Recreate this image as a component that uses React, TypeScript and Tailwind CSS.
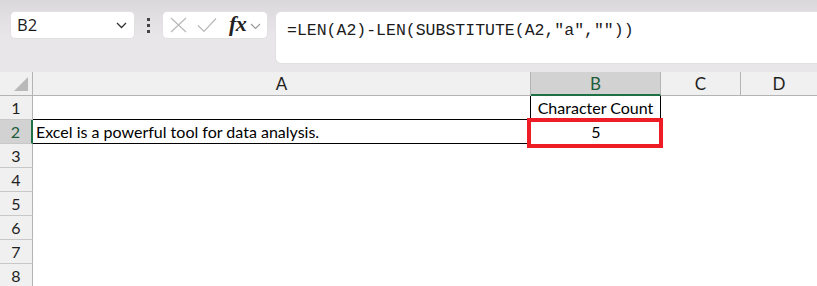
import React from "react";

const rows = [1, 2, 3, 4, 5, 6, 7, 8];

function RowHeader({ n }: { n: number }) {
  const sel = n === 2;
  return (
    <div
      className={
        "w-[33px] h-[24px] shrink-0 flex items-center justify-center border-b border-[#c8c8c8] text-[16px] " +
        (sel
          ? "bg-[#d2d2d2] border-r-2 border-r-[#1e7145] text-[#1e5c3a]"
          : "bg-[#f0f0f0] border-r border-r-[#b4b4b4] text-[#1e1e1e]")
      }
    >
      {n}
    </div>
  );
}

export default function App() {
  return (
    <div
      className="w-[817px] h-[286px] overflow-hidden bg-white"
      style={{ fontFamily: "Lato, 'Liberation Sans', sans-serif" }}
    >
      {/* Toolbar */}
      <div className="h-[72px] bg-gradient-to-b from-[#dad8da] via-[#e8e6e8] to-[#e8e6e8] flex items-start pt-[11px] pl-[10px] gap-0 relative">
        {/* Name box */}
        <div className="w-[125px] h-[28px] bg-white rounded-[5px] border border-[#e2e0e2] flex items-center justify-between pl-[6px] pr-[7px]">
          <span className="text-[16.5px] text-[#1b1b1b]" style={{ fontFamily: "'Open Sans', sans-serif" }}>B2</span>
          <svg width="11" height="7" viewBox="0 0 11 7">
            <path d="M1 1 L5.5 5.5 L10 1" fill="none" stroke="#333" strokeWidth="1.3" />
          </svg>
        </div>
        {/* dots */}
        <div className="w-[27px] h-[28px] flex flex-col items-center justify-center gap-[3px]">
          <div className="w-[3px] h-[3px] bg-[#444]" />
          <div className="w-[3px] h-[3px] bg-[#444]" />
          <div className="w-[3px] h-[3px] bg-[#444]" />
        </div>
        {/* function box */}
        <div className="w-[106px] h-[28px] bg-white rounded-[5px] border border-[#e2e0e2] flex items-center pl-[7px]">
          <svg width="17" height="16" viewBox="0 0 17 16">
            <path d="M1 1 L16 15 M16 1 L1 15" stroke="#b8b8b8" strokeWidth="1.2" fill="none" />
          </svg>
          <svg width="20" height="16" viewBox="0 0 20 16" className="ml-[10px]">
            <path d="M1 8.5 L7 14.5 L19 1.5" stroke="#b8b8b8" strokeWidth="1.2" fill="none" />
          </svg>
          <span
            className="ml-[12px] text-[22px] italic font-semibold leading-none text-[#222] tracking-[-0.5px] -mt-[2px]"
            style={{ fontFamily: "'Liberation Serif', 'DejaVu Serif', serif" }}
          >
            fx
          </span>
          <svg width="11" height="7" viewBox="0 0 11 7" className="ml-[4px] mt-[2px]">
            <path d="M1 1 L5.5 5.5 L10 1" fill="none" stroke="#999" strokeWidth="1.1" />
          </svg>
        </div>
        {/* formula box */}
        <div className="ml-[7px] flex-1 h-[53px] bg-white rounded-l-[6px] border border-r-0 border-[#e2e0e2] pl-[11px] pt-[5px]">
          <span
            className="text-[16.5px] text-[#1b1b1b] whitespace-pre"
            style={{ fontFamily: "'Liberation Mono', monospace" }}
          >
            =LEN(A2)-LEN(SUBSTITUTE(A2,"a",""))
          </span>
        </div>
      </div>

      {/* Column header row */}
      <div className="flex h-[24px]">
        <div className="w-[33px] h-[24px] bg-[#f0f0f0] border-r border-b border-[#b4b4b4] relative">
          <svg width="16" height="16" viewBox="0 0 16 16" className="absolute right-[3px] bottom-[3px]">
            <path d="M15 1 L15 15 L1 15 Z" fill="#b9b9b9" />
          </svg>
        </div>
        <div className="w-[498px] h-[24px] bg-[#f0f0f0] border-r border-b border-[#b4b4b4] flex items-center justify-center text-[17px] text-[#1e1e1e]">
          A
        </div>
        <div className="w-[130px] h-[24px] bg-[#d2d2d2] border-r border-r-[#b4b4b4] border-b-2 border-b-[#1e7145] flex items-center justify-center text-[17px] text-[#1e5c3a] pt-[1px]">
          B
        </div>
        <div className="w-[80px] h-[24px] bg-[#f0f0f0] border-r border-b border-[#b4b4b4] flex items-center justify-center text-[17px] text-[#1e1e1e]">
          C
        </div>
        <div className="flex-1 h-[24px] bg-[#f0f0f0] border-b border-[#b4b4b4] flex items-center justify-center text-[17px] text-[#1e1e1e]">
          D
        </div>
      </div>

      {/* Rows */}
      {rows.map((n) => (
        <div key={n} className="flex h-[24px]">
          <RowHeader n={n} />
          {n === 1 && (
            <>
              <div className="w-[498px] h-[24px] border-b border-black" />
              <div className="h-[24px] border-x border-black flex items-center justify-center text-[16px] text-black -ml-[1px] w-[131px]">
                Character Count
              </div>
            </>
          )}
          {n === 2 && (
            <>
              <div className="w-[498px] h-[24px] border-b border-black flex items-center pl-[3px] text-[16px] text-black">
                Excel is a powerful tool for data analysis.
              </div>
              <div className="w-[130px] h-[24px] relative flex items-center justify-center text-[16px] text-black">
                5
                <div className="absolute -left-[4px] -right-[2px] -top-[2px] -bottom-[4px] border-4 border-[#ee1c25]" />
              </div>
            </>
          )}
        </div>
      ))}
    </div>
  );
}
